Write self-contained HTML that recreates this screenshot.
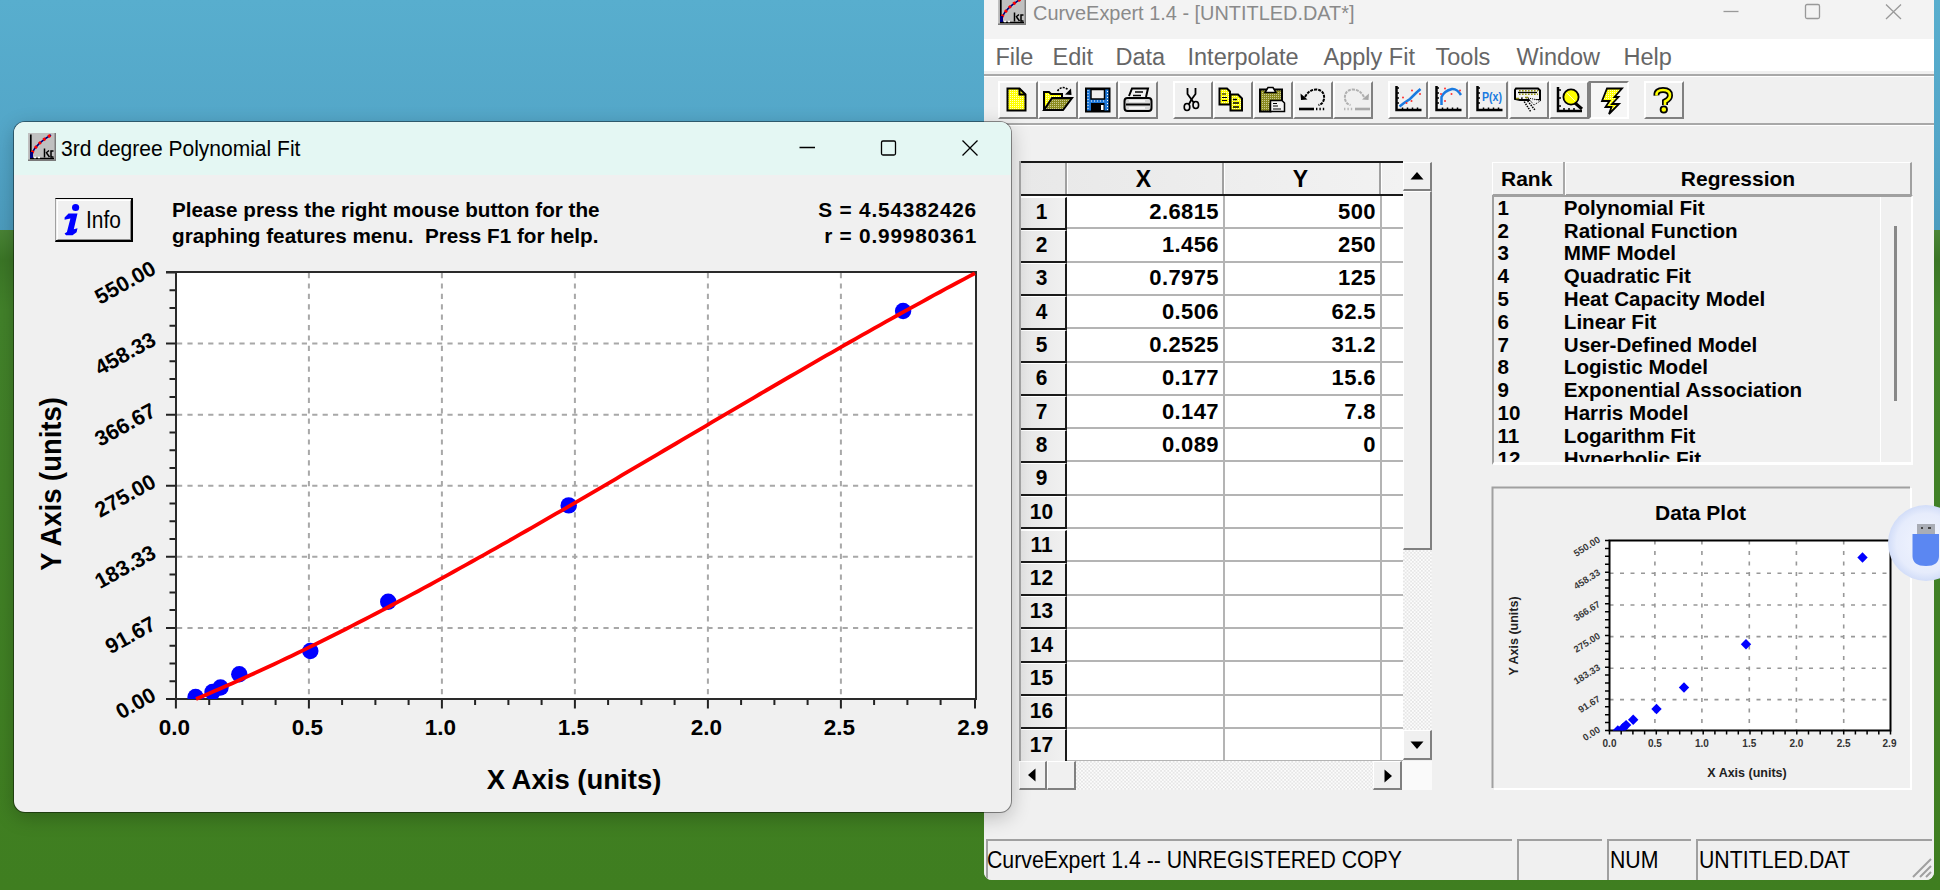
<!DOCTYPE html><html><head><meta charset="utf-8"><style>
*{margin:0;padding:0;box-sizing:border-box}
html,body{width:1940px;height:890px;overflow:hidden}
body{position:relative;font-family:"Liberation Sans",sans-serif;background:#4a8a30}
.a{position:absolute}
.t{white-space:nowrap;line-height:1}
#sky{left:0;top:0;width:1940px;height:231px;background:linear-gradient(180deg,#58aece 0%,#53a6c8 60%,#4c9cbe 100%)}
#grass{left:0;top:230px;width:1940px;height:660px;background:linear-gradient(180deg,#4a8436 0px,#3b7626 30px,#42822a 80px,#3f7e20 100%)}
#main{left:984px;top:0;width:950px;height:880px;background:#f0f0f0;border-bottom-right-radius:8px;border-bottom-left-radius:8px;overflow:hidden}
#fit{left:14px;top:122px;width:997px;height:689.5px;background:#f0f0f0;border-radius:11px;overflow:hidden;box-shadow:0 0 0 1px rgba(0,0,0,0.42),0 5px 20px rgba(0,0,0,0.24)}
.btn{position:absolute;width:40px;height:38px;background:#f0f0f0;border-style:solid;border-width:2px;border-color:#fff #808080 #808080 #fff}
.btn svg{position:absolute;left:0;top:0}
.menu{position:absolute;top:46px;font-size:23.5px;color:#666;white-space:nowrap;line-height:1}
.rh{position:absolute;left:0;width:47px;background:#f0f0f0;border-style:solid;border-width:1px 2px 2px 1px;border-color:#fff #202020 #202020 #fff;font-weight:bold;font-size:19px;text-align:center}
.cell{position:absolute;font-size:19px;text-align:right;font-weight:bold}
.li{position:absolute;font-weight:bold;font-size:20.6px;white-space:nowrap;line-height:1}
</style></head><body><div id="sky" class="a"></div><div id="grass" class="a"></div><div id="main" class="a"><div class="a" style="left:0;top:0;width:950px;height:39px;background:#f3f3f3"></div><div class="a" style="left:14px;top:-3px"><svg width="28" height="28" viewBox="0 0 28 28"><rect x="0" y="0" width="28" height="28" fill="#c0c0c0"/><path d="M27.3 0V27.3H0" stroke="#7a7a7a" stroke-width="1.5" fill="none"/><path d="M2.8 1.5V25.5H26" stroke="#000" stroke-width="1.7" fill="none"/><path d="M4 20Q9 10 23 2" stroke="#00007a" stroke-width="1.6" fill="none"/><path d="M4 20Q9 10 23 2" stroke="#ff0000" stroke-width="3" stroke-dasharray="2.6 3.2" fill="none"/><path d="M2 19H5V25H2Z" fill="#000080"/><path d="M16.5 15.5V24.5M18 20L21 17.5M18.5 20L21.5 24M25.5 18H23V24H25.5" stroke="#000" stroke-width="1.5" fill="none"/><path d="M6 24.5H8M10 24.5H12" stroke="#fff" stroke-width="1.5"/></svg></div><div class="a t" style="left:48.5px;top:2.3px;font-size:21px;color:#8a8a8a;transform:scaleX(.948);transform-origin:0 0">CurveExpert 1.4 - [UNTITLED.DAT*]</div><svg class="a" style="left:730px;top:0" width="220" height="30"><path d="M9.5 11.5H24.5" stroke="#999" stroke-width="1.3"/><rect x="91.5" y="4.5" width="14" height="14" rx="1.5" stroke="#999" stroke-width="1.3" fill="none"/><path d="M172 4.5L187 19M187 4.5L172 19" stroke="#999" stroke-width="1.3"/></svg><div class="a" style="left:0;top:39px;width:950px;height:32px;background:#fff"></div><div class="menu" style="left:11.5px">File</div><div class="menu" style="left:68.5px">Edit</div><div class="menu" style="left:131.5px">Data</div><div class="menu" style="left:203.5px">Interpolate</div><div class="menu" style="left:339.5px">Apply Fit</div><div class="menu" style="left:451.5px">Tools</div><div class="menu" style="left:532.5px">Window</div><div class="menu" style="left:639.5px">Help</div><div class="a" style="left:0;top:74px;width:950px;height:2px;background:#a8a8a8"></div><div class="a" style="left:0;top:76px;width:950px;height:1px;background:#fff"></div><div class="a" style="left:0;top:123px;width:950px;height:2px;background:#a8a8a8"></div><div class="a" style="left:0;top:125px;width:950px;height:1px;background:#fff"></div><div class="btn" style="left:14px;top:81px"></div><div class="btn" style="left:54px;top:81px"></div><div class="btn" style="left:94px;top:81px"></div><div class="btn" style="left:134px;top:81px"></div><div class="btn" style="left:189px;top:81px"></div><div class="btn" style="left:229px;top:81px"></div><div class="btn" style="left:269px;top:81px"></div><div class="btn" style="left:309px;top:81px"></div><div class="btn" style="left:349px;top:81px"></div><div class="btn" style="left:404px;top:81px"></div><div class="btn" style="left:444px;top:81px"></div><div class="btn" style="left:484px;top:81px"></div><div class="btn" style="left:525px;top:81px"></div><div class="btn" style="left:565px;top:81px"></div><div class="btn" style="left:605px;top:81px;border-color:#808080 #fff #fff #808080;background:#f6f6f6"></div><div class="btn" style="left:660px;top:81px"></div><svg class="a" style="left:0;top:76px" width="950" height="48" viewBox="984 76 950 48"><defs><pattern id="dy" width="2" height="2" patternUnits="userSpaceOnUse"><rect width="2" height="2" fill="#ffff00"/><rect width="1" height="1" fill="#ffffc0"/></pattern><pattern id="do" width="2" height="2" patternUnits="userSpaceOnUse"><rect width="2" height="2" fill="#8a8a20"/><rect width="1" height="1" fill="#c8c890"/></pattern><pattern id="dw" width="2" height="2" patternUnits="userSpaceOnUse"><rect width="2" height="2" fill="#f4f4f4"/><rect width="1" height="1" fill="#e0e0e0"/></pattern></defs><path d="M1007.5 88.5H1019.5L1025.5 94.5V110.5H1007.5Z" fill="url(#dy)" stroke="#000" stroke-width="2"/><path d="M1019.5 88.5V94.5H1025.5" stroke="#000" fill="none" stroke-width="2"/><path d="M1044 110V92H1049L1051 94H1062V98" fill="url(#dy)" stroke="#000" stroke-width="2"/><path d="M1044 110L1052 98H1072L1063 110Z" fill="url(#do)" stroke="#000" stroke-width="2"/><path d="M1057.5 91Q1062 85 1068 89.5" stroke="#000" fill="none" stroke-width="1.6" stroke-dasharray="2 1.2"/><path d="M1065 94.5L1071.5 95L1071 88.5Z" fill="#000"/><rect x="1086" y="88.5" width="23.5" height="23" fill="#1e78d8" stroke="#000" stroke-width="2"/><rect x="1091" y="89.5" width="13.5" height="9.5" fill="#f0f0f0" stroke="#000" stroke-width="1.5"/><rect x="1091" y="103" width="13.5" height="8.5" fill="#000"/><rect x="1101" y="105" width="2.5" height="5" fill="#fff"/><path d="M1088 90V110M1107.5 91V110M1091 101H1105" stroke="#fff" stroke-width="1" stroke-dasharray="1 2"/><path d="M1129 96L1132 88.5H1148L1146 97" fill="#f0f0f0" stroke="#000" stroke-width="2"/><path d="M1135 92H1143M1133 95.5H1141" stroke="#000" stroke-width="1.5"/><rect x="1124.5" y="98" width="27" height="13" rx="3" fill="#d8d8d8" stroke="#000" stroke-width="2"/><path d="M1126 104.5H1150" stroke="#000" stroke-width="2"/><path d="M1129 101H1145M1129 108H1145" stroke="#fff" stroke-width="1.5"/><path d="M1187.5 88V94L1191.5 99.5L1195.5 94V88" stroke="#000" fill="none" stroke-width="1.8"/><path d="M1189 104L1191.5 99.5L1194 103" stroke="#000" fill="none" stroke-width="1.8"/><ellipse cx="1187" cy="107" rx="2.8" ry="3.5" stroke="#000" fill="none" stroke-width="1.6"/><ellipse cx="1195.8" cy="105" rx="2.8" ry="3.5" stroke="#000" fill="none" stroke-width="1.6"/><path d="M1219.5 88.5H1227L1230 91.5V104.5H1219.5Z" fill="url(#dy)" stroke="#000" stroke-width="2"/><path d="M1222 94H1226M1222 97.5H1227M1222 100.5H1227" stroke="#000" stroke-width="1.2"/><path d="M1230.5 94.5H1238L1242 98.5V110.5H1230.5Z" fill="url(#dy)" stroke="#000" stroke-width="2"/><path d="M1233 99.5H1237M1233 103H1239M1233 107H1239" stroke="#000" stroke-width="1.3"/><path d="M1260 89.5H1282V104H1270.5V111.5H1260Z" fill="url(#do)" stroke="#000" stroke-width="2"/><path d="M1265 92.5L1268 87.5H1273L1276 92.5Z" fill="#fff" stroke="#000" stroke-width="1.5"/><path d="M1270.5 100.5H1282L1284.5 103V111.5H1270.5Z" fill="#f4f4f4" stroke="#000" stroke-width="1.5"/><path d="M1273 103.5H1277M1273 106H1278M1273 109H1281" stroke="#000" stroke-width="1.2"/><path d="M1305 97Q1309 89.5 1316 89.5Q1325 90 1324 99Q1323 104 1318.5 105" stroke="#000" fill="none" stroke-width="2" stroke-dasharray="3 1"/><path d="M1300.5 93.5L1301 100L1307.5 99.5Z" fill="#000"/><path d="M1299 109H1314" stroke="#000" stroke-width="2.6"/><path d="M1316 109H1325" stroke="#000" stroke-width="2.6" stroke-dasharray="1.4 2"/><path d="M1364 97Q1360 89.5 1353 89.5Q1344 90 1345 99Q1346 104 1350.5 105" stroke="#b0b0b0" fill="none" stroke-width="2" stroke-dasharray="3 1"/><path d="M1369 93.5L1368.5 100L1362 99.5Z" fill="#a8a8a8"/><path d="M1355 109H1370" stroke="#a8a8a8" stroke-width="2.6"/><path d="M1344 109H1353" stroke="#b8b8b8" stroke-width="2.6" stroke-dasharray="1.4 2"/><path d="M1396.5 86V110H1421.5" stroke="#000" stroke-width="2.5" fill="none"/><path d="M1396.5 88.0H1399.0 M1396.5 93.0H1399.0 M1396.5 98.0H1399.0 M1396.5 103.0H1399.0 M1402.5 110V107.5 M1407.5 110V107.5 M1412.5 110V107.5 M1417.5 110V107.5" stroke="#000" stroke-width="1.5"/><path d="M1399.5 106.5L1404 103L1410 99L1416 93L1420.5 89" stroke="#1a7ae0" stroke-width="2.5" fill="none"/><circle cx="1403.0" cy="97.5" r="1" fill="#ff3030"/><circle cx="1412.0" cy="90.5" r="1" fill="#ff3030"/><circle cx="1406.5" cy="103.0" r="1" fill="#ff3030"/><circle cx="1411.5" cy="101.0" r="1" fill="#ff3030"/><circle cx="1420.0" cy="94.0" r="1" fill="#ff3030"/><path d="M1436.5 86V110H1461.5" stroke="#000" stroke-width="2.5" fill="none"/><path d="M1436.5 88.0H1439.0 M1436.5 93.0H1439.0 M1436.5 98.0H1439.0 M1436.5 103.0H1439.0 M1442.5 110V107.5 M1447.5 110V107.5 M1452.5 110V107.5 M1457.5 110V107.5" stroke="#000" stroke-width="1.5"/><path d="M1441.5 105V97Q1444 91 1452 89Q1457 88.5 1461 95" stroke="#1a7ae0" stroke-width="2.5" fill="none"/><circle cx="1445.0" cy="88.5" r="1" fill="#ff3030"/><circle cx="1441.0" cy="94.0" r="1" fill="#ff3030"/><circle cx="1445.0" cy="101.0" r="1" fill="#ff3030"/><circle cx="1451.5" cy="94.0" r="1" fill="#ff3030"/><circle cx="1460.0" cy="90.5" r="1" fill="#ff3030"/><path d="M1477.5 86V110H1502.5" stroke="#000" stroke-width="2.5" fill="none"/><path d="M1477.5 88.0H1480.0 M1477.5 93.0H1480.0 M1477.5 98.0H1480.0 M1477.5 103.0H1480.0 M1483.5 110V107.5 M1488.5 110V107.5 M1493.5 110V107.5 M1498.5 110V107.5" stroke="#000" stroke-width="1.5"/><text x="1482" y="101" font-size="13" fill="#1a7ae0" font-weight="bold" textLength="20" lengthAdjust="spacingAndGlyphs">P(x)</text><path d="M1516 88.5H1538L1540 90.5V100H1520L1515 99V90Z" fill="#f4f4f4" stroke="#000" stroke-width="2"/><path d="M1519 90.8H1538M1519 94.2H1538" stroke="#9a9a10" stroke-width="1.6" stroke-dasharray="1.6 1.4"/><path d="M1518 92.5H1537" stroke="#000" stroke-width="1.3"/><path d="M1516 98.5H1519M1525 97.5H1528" stroke="#8a8a10" stroke-width="1.6"/><path d="M1528 98L1541 100.5L1534 105Z" fill="url(#dw)" stroke="#000" stroke-width="1" stroke-dasharray="1 1"/><path d="M1521.5 97.5L1531 112M1526 99L1535 110" stroke="#000" stroke-width="1.5" stroke-dasharray="1.5 1"/><path d="M1558 87V111H1582" stroke="#000" stroke-width="2.5" fill="none"/><path d="M1558 90H1561M1558 98H1561M1558 106H1561M1564 111V108M1569 111V108M1574 111V108" stroke="#000" stroke-width="1.5"/><circle cx="1571" cy="97" r="7.6" fill="#ffff00" stroke="#000" stroke-width="1.8"/><path d="M1567 93L1575 101" stroke="#fff" stroke-width="1" opacity=".7"/><path d="M1575 103L1582 109" stroke="#000" stroke-width="3"/><path d="M1607 88.5H1622L1614.5 97H1618.5L1612 104H1619L1609 114L1611.5 107H1605.5L1609.5 101H1602Z" fill="url(#dy)" stroke="#000" stroke-width="1.8" stroke-linejoin="miter"/><path d="M1656.5 95.5Q1656 90 1663 90Q1670 90 1670 95.5Q1670 99 1665 101.5V105" stroke="#000" stroke-width="6" fill="none"/><path d="M1656.5 95.5Q1656 90 1663 90Q1670 90 1670 95.5Q1670 99 1665 101.5V105" stroke="#ffff00" stroke-width="2.6" fill="none"/><circle cx="1663.8" cy="109.5" r="3.2" fill="#ffff00" stroke="#000" stroke-width="1.8"/></svg><div class="a" style="left:0;top:839px;width:950px;height:41px;background:#f0f0f0"></div><div class="a" style="left:2px;top:839px;width:526px;height:41px;border-top:2px solid #a0a0a0;border-left:2px solid #a0a0a0"></div><div class="a" style="left:533px;top:839px;width:85px;height:41px;border-top:2px solid #a0a0a0;border-left:2px solid #a0a0a0"></div><div class="a" style="left:623px;top:839px;width:84px;height:41px;border-top:2px solid #a0a0a0;border-left:2px solid #a0a0a0"></div><div class="a" style="left:712px;top:839px;width:236px;height:41px;border-top:2px solid #a0a0a0;border-left:2px solid #a0a0a0"></div><div class="a t" style="left:3px;top:849.3px;font-size:23px;color:#000;transform:scaleX(.925);transform-origin:0 0">CurveExpert 1.4 -- UNREGISTERED COPY</div><div class="a t" style="left:625.5px;top:849.3px;font-size:23px;color:#000;transform:scaleX(.925);transform-origin:0 0">NUM</div><div class="a t" style="left:714.5px;top:849.3px;font-size:23px;color:#000;transform:scaleX(.925);transform-origin:0 0">UNTITLED.DAT</div><svg class="a" style="left:925px;top:855px" width="25" height="25"><path d="M22 4L4 22M22 11L11 22M22 17L17 22" stroke="#a0a0a0" stroke-width="2"/></svg><div class="a" style="left:36px;top:161px;width:383px;height:600px;background:#fff"></div><div class="a" style="left:36px;top:161px;width:383px;height:35px;background:linear-gradient(90deg,#e8e8e8,#f2f2f2);border-top:2px solid #1a1a1a;border-bottom:2px solid #1a1a1a"></div><div class="a" style="left:36px;top:163px;width:47px;height:31px;border-left:1px solid #fff;border-right:2px solid #a0a0a0"></div><div class="a" style="left:83px;top:163px;width:157px;height:31px;border-left:1px solid #fff;border-right:2px solid #a0a0a0"></div><div class="a t" style="left:81px;top:167.8px;width:157px;text-align:center;font-size:23px;font-weight:bold">X</div><div class="a" style="left:240px;top:163px;width:157px;height:31px;border-left:1px solid #fff;border-right:2px solid #a0a0a0"></div><div class="a t" style="left:238px;top:167.8px;width:157px;text-align:center;font-size:23px;font-weight:bold">Y</div><div class="a" style="left:397px;top:163px;width:22px;height:31px;border-left:1px solid #fff;"></div><div class="a" style="left:36px;top:196.5px;width:47px;height:33.3px;background:linear-gradient(90deg,#e6e6e6,#f0f0f0);border-top:1px solid #fff;border-left:1px solid #fff;border-right:2px solid #1a1a1a;border-bottom:2px solid #1a1a1a"></div><div class="a t" style="left:35px;top:200.8px;width:45px;text-align:center;font-size:22px;font-weight:bold;transform:scaleX(.95)">1</div><div class="a" style="left:83px;top:227.3px;width:336px;height:2px;background:#b4b4b4"></div><div class="a" style="left:36px;top:229.8px;width:47px;height:33.3px;background:linear-gradient(90deg,#e6e6e6,#f0f0f0);border-top:1px solid #fff;border-left:1px solid #fff;border-right:2px solid #1a1a1a;border-bottom:2px solid #1a1a1a"></div><div class="a t" style="left:35px;top:234.1px;width:45px;text-align:center;font-size:22px;font-weight:bold;transform:scaleX(.95)">2</div><div class="a" style="left:83px;top:260.6px;width:336px;height:2px;background:#b4b4b4"></div><div class="a" style="left:36px;top:263.1px;width:47px;height:33.3px;background:linear-gradient(90deg,#e6e6e6,#f0f0f0);border-top:1px solid #fff;border-left:1px solid #fff;border-right:2px solid #1a1a1a;border-bottom:2px solid #1a1a1a"></div><div class="a t" style="left:35px;top:267.4px;width:45px;text-align:center;font-size:22px;font-weight:bold;transform:scaleX(.95)">3</div><div class="a" style="left:83px;top:293.9px;width:336px;height:2px;background:#b4b4b4"></div><div class="a" style="left:36px;top:296.4px;width:47px;height:33.3px;background:linear-gradient(90deg,#e6e6e6,#f0f0f0);border-top:1px solid #fff;border-left:1px solid #fff;border-right:2px solid #1a1a1a;border-bottom:2px solid #1a1a1a"></div><div class="a t" style="left:35px;top:300.7px;width:45px;text-align:center;font-size:22px;font-weight:bold;transform:scaleX(.95)">4</div><div class="a" style="left:83px;top:327.2px;width:336px;height:2px;background:#b4b4b4"></div><div class="a" style="left:36px;top:329.7px;width:47px;height:33.3px;background:linear-gradient(90deg,#e6e6e6,#f0f0f0);border-top:1px solid #fff;border-left:1px solid #fff;border-right:2px solid #1a1a1a;border-bottom:2px solid #1a1a1a"></div><div class="a t" style="left:35px;top:334.0px;width:45px;text-align:center;font-size:22px;font-weight:bold;transform:scaleX(.95)">5</div><div class="a" style="left:83px;top:360.5px;width:336px;height:2px;background:#b4b4b4"></div><div class="a" style="left:36px;top:363.0px;width:47px;height:33.3px;background:linear-gradient(90deg,#e6e6e6,#f0f0f0);border-top:1px solid #fff;border-left:1px solid #fff;border-right:2px solid #1a1a1a;border-bottom:2px solid #1a1a1a"></div><div class="a t" style="left:35px;top:367.3px;width:45px;text-align:center;font-size:22px;font-weight:bold;transform:scaleX(.95)">6</div><div class="a" style="left:83px;top:393.8px;width:336px;height:2px;background:#b4b4b4"></div><div class="a" style="left:36px;top:396.3px;width:47px;height:33.3px;background:linear-gradient(90deg,#e6e6e6,#f0f0f0);border-top:1px solid #fff;border-left:1px solid #fff;border-right:2px solid #1a1a1a;border-bottom:2px solid #1a1a1a"></div><div class="a t" style="left:35px;top:400.6px;width:45px;text-align:center;font-size:22px;font-weight:bold;transform:scaleX(.95)">7</div><div class="a" style="left:83px;top:427.1px;width:336px;height:2px;background:#b4b4b4"></div><div class="a" style="left:36px;top:429.6px;width:47px;height:33.3px;background:linear-gradient(90deg,#e6e6e6,#f0f0f0);border-top:1px solid #fff;border-left:1px solid #fff;border-right:2px solid #1a1a1a;border-bottom:2px solid #1a1a1a"></div><div class="a t" style="left:35px;top:433.9px;width:45px;text-align:center;font-size:22px;font-weight:bold;transform:scaleX(.95)">8</div><div class="a" style="left:83px;top:460.4px;width:336px;height:2px;background:#b4b4b4"></div><div class="a" style="left:36px;top:462.9px;width:47px;height:33.3px;background:linear-gradient(90deg,#e6e6e6,#f0f0f0);border-top:1px solid #fff;border-left:1px solid #fff;border-right:2px solid #1a1a1a;border-bottom:2px solid #1a1a1a"></div><div class="a t" style="left:35px;top:467.2px;width:45px;text-align:center;font-size:22px;font-weight:bold;transform:scaleX(.95)">9</div><div class="a" style="left:83px;top:493.7px;width:336px;height:2px;background:#b4b4b4"></div><div class="a" style="left:36px;top:496.2px;width:47px;height:33.3px;background:linear-gradient(90deg,#e6e6e6,#f0f0f0);border-top:1px solid #fff;border-left:1px solid #fff;border-right:2px solid #1a1a1a;border-bottom:2px solid #1a1a1a"></div><div class="a t" style="left:35px;top:500.5px;width:45px;text-align:center;font-size:22px;font-weight:bold;transform:scaleX(.95)">10</div><div class="a" style="left:83px;top:527.0px;width:336px;height:2px;background:#b4b4b4"></div><div class="a" style="left:36px;top:529.5px;width:47px;height:33.3px;background:linear-gradient(90deg,#e6e6e6,#f0f0f0);border-top:1px solid #fff;border-left:1px solid #fff;border-right:2px solid #1a1a1a;border-bottom:2px solid #1a1a1a"></div><div class="a t" style="left:35px;top:533.8px;width:45px;text-align:center;font-size:22px;font-weight:bold;transform:scaleX(.95)">11</div><div class="a" style="left:83px;top:560.3px;width:336px;height:2px;background:#b4b4b4"></div><div class="a" style="left:36px;top:562.8px;width:47px;height:33.3px;background:linear-gradient(90deg,#e6e6e6,#f0f0f0);border-top:1px solid #fff;border-left:1px solid #fff;border-right:2px solid #1a1a1a;border-bottom:2px solid #1a1a1a"></div><div class="a t" style="left:35px;top:567.1px;width:45px;text-align:center;font-size:22px;font-weight:bold;transform:scaleX(.95)">12</div><div class="a" style="left:83px;top:593.6px;width:336px;height:2px;background:#b4b4b4"></div><div class="a" style="left:36px;top:596.1px;width:47px;height:33.3px;background:linear-gradient(90deg,#e6e6e6,#f0f0f0);border-top:1px solid #fff;border-left:1px solid #fff;border-right:2px solid #1a1a1a;border-bottom:2px solid #1a1a1a"></div><div class="a t" style="left:35px;top:600.4px;width:45px;text-align:center;font-size:22px;font-weight:bold;transform:scaleX(.95)">13</div><div class="a" style="left:83px;top:626.9px;width:336px;height:2px;background:#b4b4b4"></div><div class="a" style="left:36px;top:629.4px;width:47px;height:33.3px;background:linear-gradient(90deg,#e6e6e6,#f0f0f0);border-top:1px solid #fff;border-left:1px solid #fff;border-right:2px solid #1a1a1a;border-bottom:2px solid #1a1a1a"></div><div class="a t" style="left:35px;top:633.7px;width:45px;text-align:center;font-size:22px;font-weight:bold;transform:scaleX(.95)">14</div><div class="a" style="left:83px;top:660.2px;width:336px;height:2px;background:#b4b4b4"></div><div class="a" style="left:36px;top:662.7px;width:47px;height:33.3px;background:linear-gradient(90deg,#e6e6e6,#f0f0f0);border-top:1px solid #fff;border-left:1px solid #fff;border-right:2px solid #1a1a1a;border-bottom:2px solid #1a1a1a"></div><div class="a t" style="left:35px;top:667.0px;width:45px;text-align:center;font-size:22px;font-weight:bold;transform:scaleX(.95)">15</div><div class="a" style="left:83px;top:693.5px;width:336px;height:2px;background:#b4b4b4"></div><div class="a" style="left:36px;top:696.0px;width:47px;height:33.3px;background:linear-gradient(90deg,#e6e6e6,#f0f0f0);border-top:1px solid #fff;border-left:1px solid #fff;border-right:2px solid #1a1a1a;border-bottom:2px solid #1a1a1a"></div><div class="a t" style="left:35px;top:700.3px;width:45px;text-align:center;font-size:22px;font-weight:bold;transform:scaleX(.95)">16</div><div class="a" style="left:83px;top:726.8px;width:336px;height:2px;background:#b4b4b4"></div><div class="a" style="left:36px;top:729.3px;width:47px;height:33.3px;background:linear-gradient(90deg,#e6e6e6,#f0f0f0);border-top:1px solid #fff;border-left:1px solid #fff;border-right:2px solid #1a1a1a;border-bottom:2px solid #1a1a1a"></div><div class="a t" style="left:35px;top:733.6px;width:45px;text-align:center;font-size:22px;font-weight:bold;transform:scaleX(.95)">17</div><div class="a" style="left:83px;top:760.1px;width:336px;height:2px;background:#b4b4b4"></div><div class="a" style="left:239px;top:196px;width:2px;height:566px;background:#b4b4b4"></div><div class="a" style="left:396px;top:196px;width:2px;height:566px;background:#b4b4b4"></div><div class="a t" style="left:85px;top:200.8px;width:150px;text-align:right;font-size:22px;font-weight:bold;letter-spacing:.4px">2.6815</div><div class="a t" style="left:242px;top:200.8px;width:150px;text-align:right;font-size:22px;font-weight:bold;letter-spacing:.4px">500</div><div class="a t" style="left:85px;top:234.1px;width:150px;text-align:right;font-size:22px;font-weight:bold;letter-spacing:.4px">1.456</div><div class="a t" style="left:242px;top:234.1px;width:150px;text-align:right;font-size:22px;font-weight:bold;letter-spacing:.4px">250</div><div class="a t" style="left:85px;top:267.4px;width:150px;text-align:right;font-size:22px;font-weight:bold;letter-spacing:.4px">0.7975</div><div class="a t" style="left:242px;top:267.4px;width:150px;text-align:right;font-size:22px;font-weight:bold;letter-spacing:.4px">125</div><div class="a t" style="left:85px;top:300.7px;width:150px;text-align:right;font-size:22px;font-weight:bold;letter-spacing:.4px">0.506</div><div class="a t" style="left:242px;top:300.7px;width:150px;text-align:right;font-size:22px;font-weight:bold;letter-spacing:.4px">62.5</div><div class="a t" style="left:85px;top:334.0px;width:150px;text-align:right;font-size:22px;font-weight:bold;letter-spacing:.4px">0.2525</div><div class="a t" style="left:242px;top:334.0px;width:150px;text-align:right;font-size:22px;font-weight:bold;letter-spacing:.4px">31.2</div><div class="a t" style="left:85px;top:367.3px;width:150px;text-align:right;font-size:22px;font-weight:bold;letter-spacing:.4px">0.177</div><div class="a t" style="left:242px;top:367.3px;width:150px;text-align:right;font-size:22px;font-weight:bold;letter-spacing:.4px">15.6</div><div class="a t" style="left:85px;top:400.6px;width:150px;text-align:right;font-size:22px;font-weight:bold;letter-spacing:.4px">0.147</div><div class="a t" style="left:242px;top:400.6px;width:150px;text-align:right;font-size:22px;font-weight:bold;letter-spacing:.4px">7.8</div><div class="a t" style="left:85px;top:433.9px;width:150px;text-align:right;font-size:22px;font-weight:bold;letter-spacing:.4px">0.089</div><div class="a t" style="left:242px;top:433.9px;width:150px;text-align:right;font-size:22px;font-weight:bold;letter-spacing:.4px">0</div><div class="a" style="left:35px;top:161px;width:1.5px;height:600px;background:#a8a8a8"></div><div class="a" style="left:419px;top:162px;width:29px;height:598px;background:repeating-conic-gradient(#e6e6e6 0 25%,#fcfcfc 0 50%) 0 0/3.6px 3.6px"></div><div class="a" style="left:419px;top:162px;width:29px;height:29px;background:#f0f0f0;border-style:solid;border-width:1px 2px 2px 1px;border-color:#fff #808080 #808080 #fff"></div><svg class="a" style="left:426px;top:171px" width="14" height="9"><path d="M0.5 8.5L7 1L13.5 8.5Z" fill="#000"/></svg><div class="a" style="left:419px;top:191px;width:29px;height:359px;background:#f0f0f0;border-style:solid;border-width:1px 2px 2px 1px;border-color:#fff #808080 #808080 #fff"></div><div class="a" style="left:419px;top:730px;width:29px;height:30px;background:#f0f0f0;border-style:solid;border-width:1px 2px 2px 1px;border-color:#fff #808080 #808080 #fff"></div><svg class="a" style="left:426px;top:741px" width="14" height="9"><path d="M0.5 0.5L7 8L13.5 0.5Z" fill="#000"/></svg><div class="a" style="left:36px;top:761px;width:383px;height:29px;background:repeating-conic-gradient(#e6e6e6 0 25%,#fcfcfc 0 50%) 0 0/3.6px 3.6px"></div><div class="a" style="left:35px;top:761px;width:28px;height:29px;background:#f0f0f0;border-style:solid;border-width:1px 2px 2px 1px;border-color:#fff #808080 #808080 #fff"></div><svg class="a" style="left:43px;top:768px" width="9" height="14"><path d="M8.5 0.5L1 7L8.5 13.5Z" fill="#000"/></svg><div class="a" style="left:63px;top:761px;width:29px;height:29px;background:#f0f0f0;border-style:solid;border-width:1px 2px 2px 1px;border-color:#fff #808080 #808080 #fff"></div><div class="a" style="left:389px;top:761px;width:29px;height:29px;background:#f0f0f0;border-style:solid;border-width:1px 2px 2px 1px;border-color:#fff #808080 #808080 #fff"></div><svg class="a" style="left:400px;top:769px" width="9" height="14"><path d="M0.5 0.5L8 7L0.5 13.5Z" fill="#000"/></svg><div class="a" style="left:418px;top:761px;width:30px;height:29px;background:#fafafa"></div><div class="a" style="left:508px;top:162px;width:420px;height:34px;background:#f0f0f0;border-style:solid;border-width:1px 2px 2px 1px;border-color:#fff #a0a0a0 #a0a0a0 #fff"></div><div class="a" style="left:579px;top:162px;width:2px;height:33px;background:#a8a8a8"></div><div class="a" style="left:581px;top:163px;width:1px;height:32px;background:#fff"></div><div class="a t" style="left:517px;top:168px;font-size:21px;font-weight:bold">Rank</div><div class="a t" style="left:581px;top:168px;width:346px;text-align:center;font-size:21px;font-weight:bold">Regression</div><div class="a" style="left:508px;top:195px;width:421px;height:270px;background:#f0f0f0;border-style:solid;border-width:2px 2px 3px 2px;border-color:#a0a0a0 #fff #fff #a0a0a0;overflow:hidden"><div class="li" style="left:3.5px;top:0.8px">1</div><div class="li" style="left:69.8px;top:0.8px">Polynomial Fit</div><div class="li" style="left:3.5px;top:23.6px">2</div><div class="li" style="left:69.8px;top:23.6px">Rational Function</div><div class="li" style="left:3.5px;top:46.4px">3</div><div class="li" style="left:69.8px;top:46.4px">MMF Model</div><div class="li" style="left:3.5px;top:69.2px">4</div><div class="li" style="left:69.8px;top:69.2px">Quadratic Fit</div><div class="li" style="left:3.5px;top:92.0px">5</div><div class="li" style="left:69.8px;top:92.0px">Heat Capacity Model</div><div class="li" style="left:3.5px;top:114.8px">6</div><div class="li" style="left:69.8px;top:114.8px">Linear Fit</div><div class="li" style="left:3.5px;top:137.6px">7</div><div class="li" style="left:69.8px;top:137.6px">User-Defined Model</div><div class="li" style="left:3.5px;top:160.4px">8</div><div class="li" style="left:69.8px;top:160.4px">Logistic Model</div><div class="li" style="left:3.5px;top:183.2px">9</div><div class="li" style="left:69.8px;top:183.2px">Exponential Association</div><div class="li" style="left:3.5px;top:206.0px">10</div><div class="li" style="left:69.8px;top:206.0px">Harris Model</div><div class="li" style="left:3.5px;top:228.8px">11</div><div class="li" style="left:69.8px;top:228.8px">Logarithm Fit</div><div class="li" style="left:3.5px;top:251.6px">12</div><div class="li" style="left:69.8px;top:251.6px">Hyperbolic Fit</div></div><div class="a" style="left:896px;top:197px;width:1px;height:266px;background:#fff"></div><div class="a" style="left:910px;top:226px;width:3px;height:175px;background:#888"></div><svg class="a" style="left:506px;top:480px" width="450" height="320" viewBox="1490 480 450 320"><path d="M1492.5 788V487.5H1910" stroke="#a0a0a0" stroke-width="2" fill="none"/><path d="M1494 789H1911V488" stroke="#fff" stroke-width="2" fill="none"/><text x="1700.5" y="520" text-anchor="middle" font-size="21" font-weight="bold">Data Plot</text><rect x="1609.5" y="540.5" width="281.0" height="190.0" fill="#fff"/><path d="M1654.9 540.5V730.5 M1701.9 540.5V730.5 M1749.3 540.5V730.5 M1796.4 540.5V730.5 M1843.7 540.5V730.5 M1609.5 573.3H1890.5 M1609.5 605.0H1890.5 M1609.5 636.6H1890.5 M1609.5 668.3H1890.5 M1609.5 699.6H1890.5" stroke="#989898" stroke-width="1.6" stroke-dasharray="4 6.5" fill="none"/><path d="M1605 540.5H1609.5 M1609.5 730.5V734.5 M1605 548.4H1609.5 M1621.2 730.5V734.5 M1605 556.3H1609.5 M1632.9 730.5V734.5 M1605 564.3H1609.5 M1644.6 730.5V734.5 M1605 572.2H1609.5 M1656.3 730.5V734.5 M1605 580.1H1609.5 M1668.0 730.5V734.5 M1605 588.0H1609.5 M1679.7 730.5V734.5 M1605 595.9H1609.5 M1691.5 730.5V734.5 M1605 603.8H1609.5 M1703.2 730.5V734.5 M1605 611.8H1609.5 M1714.9 730.5V734.5 M1605 619.7H1609.5 M1726.6 730.5V734.5 M1605 627.6H1609.5 M1738.3 730.5V734.5 M1605 635.5H1609.5 M1750.0 730.5V734.5 M1605 643.4H1609.5 M1761.7 730.5V734.5 M1605 651.3H1609.5 M1773.4 730.5V734.5 M1605 659.3H1609.5 M1785.1 730.5V734.5 M1605 667.2H1609.5 M1796.8 730.5V734.5 M1605 675.1H1609.5 M1808.5 730.5V734.5 M1605 683.0H1609.5 M1820.2 730.5V734.5 M1605 690.9H1609.5 M1831.9 730.5V734.5 M1605 698.9H1609.5 M1843.7 730.5V734.5 M1605 706.8H1609.5 M1855.4 730.5V734.5 M1605 714.7H1609.5 M1867.1 730.5V734.5 M1605 722.6H1609.5 M1878.8 730.5V734.5 M1605 730.5H1609.5 M1890.5 730.5V734.5" stroke="#000" stroke-width="1.5"/><rect x="1609.5" y="540.5" width="281.0" height="190.0" fill="none" stroke="#000" stroke-width="2"/><clipPath id="mpc"><rect x="1610" y="541" width="280" height="189.5"/></clipPath><g clip-path="url(#mpc)"><path d="M1862.5 552.3l5.2 5.2l-5.2 5.2l-5.2 -5.2Z" fill="#0000ff"/><path d="M1746.0 639.0l5.2 5.2l-5.2 5.2l-5.2 -5.2Z" fill="#0000ff"/><path d="M1684.0 682.3l5.2 5.2l-5.2 5.2l-5.2 -5.2Z" fill="#0000ff"/><path d="M1656.5 703.8l5.2 5.2l-5.2 5.2l-5.2 -5.2Z" fill="#0000ff"/><path d="M1633.2 714.5l5.2 5.2l-5.2 5.2l-5.2 -5.2Z" fill="#0000ff"/><path d="M1626.1 719.9l5.2 5.2l-5.2 5.2l-5.2 -5.2Z" fill="#0000ff"/><path d="M1623.3 722.6l5.2 5.2l-5.2 5.2l-5.2 -5.2Z" fill="#0000ff"/><path d="M1617.8 725.3l5.2 5.2l-5.2 5.2l-5.2 -5.2Z" fill="#0000ff"/></g><text x="1601" y="541.5" text-anchor="end" font-size="9.5" fill="#3a3a3a" font-weight="bold" transform="rotate(-32 1601 541.5)">550.00</text><text x="1601" y="574.3" text-anchor="end" font-size="9.5" fill="#3a3a3a" font-weight="bold" transform="rotate(-32 1601 574.3)">458.33</text><text x="1601" y="606.0" text-anchor="end" font-size="9.5" fill="#3a3a3a" font-weight="bold" transform="rotate(-32 1601 606.0)">366.67</text><text x="1601" y="637.6" text-anchor="end" font-size="9.5" fill="#3a3a3a" font-weight="bold" transform="rotate(-32 1601 637.6)">275.00</text><text x="1601" y="669.3" text-anchor="end" font-size="9.5" fill="#3a3a3a" font-weight="bold" transform="rotate(-32 1601 669.3)">183.33</text><text x="1601" y="700.6" text-anchor="end" font-size="9.5" fill="#3a3a3a" font-weight="bold" transform="rotate(-32 1601 700.6)">91.67</text><text x="1601" y="731.5" text-anchor="end" font-size="9.5" fill="#3a3a3a" font-weight="bold" transform="rotate(-32 1601 731.5)">0.00</text><text x="1609.5" y="746.5" text-anchor="middle" font-size="10" fill="#333" font-weight="bold">0.0</text><text x="1654.9" y="746.5" text-anchor="middle" font-size="10" fill="#333" font-weight="bold">0.5</text><text x="1701.9" y="746.5" text-anchor="middle" font-size="10" fill="#333" font-weight="bold">1.0</text><text x="1749.3" y="746.5" text-anchor="middle" font-size="10" fill="#333" font-weight="bold">1.5</text><text x="1796.4" y="746.5" text-anchor="middle" font-size="10" fill="#333" font-weight="bold">2.0</text><text x="1843.7" y="746.5" text-anchor="middle" font-size="10" fill="#333" font-weight="bold">2.5</text><text x="1889.5" y="746.5" text-anchor="middle" font-size="10" fill="#333" font-weight="bold">2.9</text><text x="1747" y="777" text-anchor="middle" font-size="12.5" font-weight="bold" fill="#222">X Axis (units)</text><text x="0" y="0" text-anchor="middle" font-size="12.5" font-weight="bold" fill="#222" transform="translate(1517.5 636) rotate(-90)">Y Axis (units)</text></svg></div><div id="fit" class="a"><div class="a" style="left:0;top:0;width:997px;height:53px;background:#e4f7f3"></div><div class="a" style="left:14px;top:11px"><svg width="28" height="28" viewBox="0 0 28 28"><rect x="0" y="0" width="28" height="28" fill="#c0c0c0"/><path d="M27.3 0V27.3H0" stroke="#7a7a7a" stroke-width="1.5" fill="none"/><path d="M2.8 1.5V25.5H26" stroke="#000" stroke-width="1.7" fill="none"/><path d="M4 20Q9 10 23 2" stroke="#00007a" stroke-width="1.6" fill="none"/><path d="M4 20Q9 10 23 2" stroke="#ff0000" stroke-width="3" stroke-dasharray="2.6 3.2" fill="none"/><path d="M2 19H5V25H2Z" fill="#000080"/><path d="M16.5 15.5V24.5M18 20L21 17.5M18.5 20L21.5 24M25.5 18H23V24H25.5" stroke="#000" stroke-width="1.5" fill="none"/><path d="M6 24.5H8M10 24.5H12" stroke="#fff" stroke-width="1.5"/></svg></div><div class="a t" style="left:47px;top:16px;font-size:22px;color:#000;transform:scaleX(.955);transform-origin:0 0">3rd degree Polynomial Fit</div><svg class="a" style="left:780px;top:10px" width="216" height="40"><path d="M5.5 15.5H21" stroke="#000" stroke-width="1.3"/><rect x="87.5" y="9" width="14" height="14" rx="1.5" stroke="#000" stroke-width="1.3" fill="none"/><path d="M168.5 8.5L183.5 23.5M183.5 8.5L168.5 23.5" stroke="#000" stroke-width="1.3"/></svg><svg class="a" style="left:0;top:0" width="996" height="688" viewBox="14 122 996 688"><rect x="176" y="272" width="800" height="427" fill="#fff"/><path d="M308.9 273V698 M441.9 273V698 M574.9 273V698 M707.9 273V698 M840.9 273V698 M177 343.6H975 M177 414.7H975 M177 485.7H975 M177 556.8H975 M177 627.9H975" stroke="#a8a8a8" stroke-width="2" stroke-dasharray="5.2 5.2" fill="none"/><path d="M166 272.5H176 M169.5 290.3H176 M169.5 308.0H176 M169.5 325.8H176 M166 343.6H176 M169.5 361.3H176 M169.5 379.1H176 M169.5 396.9H176 M166 414.7H176 M169.5 432.4H176 M169.5 450.2H176 M169.5 468.0H176 M166 485.7H176 M169.5 503.5H176 M169.5 521.3H176 M169.5 539.0H176 M166 556.8H176 M169.5 574.6H176 M169.5 592.4H176 M169.5 610.1H176 M166 627.9H176 M169.5 645.7H176 M169.5 663.4H176 M169.5 681.2H176 M166 699.0H176 M175.9 698V708.5 M209.2 698V705 M242.4 698V705 M275.6 698V705 M308.9 698V708.5 M342.1 698V705 M375.4 698V705 M408.6 698V705 M441.9 698V708.5 M475.1 698V705 M508.4 698V705 M541.6 698V705 M574.9 698V708.5 M608.1 698V705 M641.4 698V705 M674.6 698V705 M707.9 698V708.5 M741.1 698V705 M774.4 698V705 M807.6 698V705 M840.9 698V708.5 M874.1 698V705 M907.4 698V705 M940.6 698V705 M975 698V708.5" stroke="#222" stroke-width="2" fill="none"/><path d="M166 272H976V699H176V272" stroke="#2a2a2a" stroke-width="2" fill="none"/><clipPath id="pc"><rect x="176" y="272" width="800" height="427"/></clipPath><g clip-path="url(#pc)" fill="#0000ff"><circle cx="903.1" cy="311.0" r="8.2"/><circle cx="568.7" cy="505.4" r="8.2"/><circle cx="388.2" cy="601.7" r="8.2"/><circle cx="310.3" cy="651.0" r="8.2"/><circle cx="239.3" cy="674.2" r="8.2"/><circle cx="220.5" cy="687.5" r="8.2"/><circle cx="212.5" cy="692.0" r="8.2"/><circle cx="195.6" cy="697.0" r="8.2"/></g><polyline points="196,699 202.0,696.4 208.0,693.9 214.0,691.3 220.0,688.7 226.0,686.1 232.0,683.4 238.0,680.7 244.0,678.0 250.0,675.3 256.0,672.6 262.0,669.8 268.0,667.0 274.0,664.2 280.0,661.4 286.0,658.5 292.0,655.7 298.0,652.8 304.0,649.9 310.0,646.9 316.0,644.0 322.0,641.0 328.0,638.0 334.0,635.0 340.0,632.0 346.0,629.0 352.0,625.9 358.0,622.8 364.0,619.7 370.0,616.6 376.0,613.5 382.0,610.4 388.0,607.2 394.0,604.0 400.0,600.8 406.0,597.6 412.0,594.4 418.0,591.2 424.0,587.9 430.0,584.7 436.0,581.4 442.0,578.1 448.0,574.8 454.0,571.5 460.0,568.2 466.0,564.9 472.0,561.5 478.0,558.2 484.0,554.8 490.0,551.4 496.0,548.1 502.0,544.7 508.0,541.3 514.0,537.9 520.0,534.4 526.0,531.0 532.0,527.6 538.0,524.1 544.0,520.7 550.0,517.2 556.0,513.7 562.0,510.3 568.0,506.8 574.0,503.3 580.0,499.8 586.0,496.3 592.0,492.8 598.0,489.3 604.0,485.8 610.0,482.3 616.0,478.8 622.0,475.2 628.0,471.7 634.0,468.2 640.0,464.7 646.0,461.1 652.0,457.6 658.0,454.1 664.0,450.5 670.0,447.0 676.0,443.5 682.0,439.9 688.0,436.4 694.0,432.8 700.0,429.3 706.0,425.8 712.0,422.2 718.0,418.7 724.0,415.2 730.0,411.6 736.0,408.1 742.0,404.6 748.0,401.1 754.0,397.6 760.0,394.0 766.0,390.5 772.0,387.0 778.0,383.5 784.0,380.0 790.0,376.5 796.0,373.1 802.0,369.6 808.0,366.1 814.0,362.7 820.0,359.2 826.0,355.7 832.0,352.3 838.0,348.9 844.0,345.4 850.0,342.0 856.0,338.6 862.0,335.2 868.0,331.8 874.0,328.4 880.0,325.1 886.0,321.7 892.0,318.4 898.0,315.0 904.0,311.7 910.0,308.4 916.0,305.1 922.0,301.8 928.0,298.5 934.0,295.2 940.0,292.0 946.0,288.7 952.0,285.5 958.0,282.3 964.0,279.1 970.0,275.9 975.0,273.3" stroke="#ff0000" stroke-width="3.8" fill="none"/><text x="157.5" y="273.0" text-anchor="end" font-size="21.5" font-weight="bold" transform="rotate(-29 157.5 273.0)">550.00</text><text x="157.5" y="344.1" text-anchor="end" font-size="21.5" font-weight="bold" transform="rotate(-29 157.5 344.1)">458.33</text><text x="157.5" y="415.2" text-anchor="end" font-size="21.5" font-weight="bold" transform="rotate(-29 157.5 415.2)">366.67</text><text x="157.5" y="486.2" text-anchor="end" font-size="21.5" font-weight="bold" transform="rotate(-29 157.5 486.2)">275.00</text><text x="157.5" y="557.3" text-anchor="end" font-size="21.5" font-weight="bold" transform="rotate(-29 157.5 557.3)">183.33</text><text x="157.5" y="628.4" text-anchor="end" font-size="21.5" font-weight="bold" transform="rotate(-29 157.5 628.4)">91.67</text><text x="157.5" y="699.5" text-anchor="end" font-size="21.5" font-weight="bold" transform="rotate(-29 157.5 699.5)">0.00</text><text x="174.4" y="735" text-anchor="middle" font-size="22.5" font-weight="bold">0.0</text><text x="307.4" y="735" text-anchor="middle" font-size="22.5" font-weight="bold">0.5</text><text x="440.4" y="735" text-anchor="middle" font-size="22.5" font-weight="bold">1.0</text><text x="573.4" y="735" text-anchor="middle" font-size="22.5" font-weight="bold">1.5</text><text x="706.4" y="735" text-anchor="middle" font-size="22.5" font-weight="bold">2.0</text><text x="839.4" y="735" text-anchor="middle" font-size="22.5" font-weight="bold">2.5</text><text x="973.0" y="735" text-anchor="middle" font-size="22.5" font-weight="bold">2.9</text><text x="0" y="0" text-anchor="middle" font-size="28.5" font-weight="bold" transform="translate(574 789) scale(.965 1)">X Axis (units)</text><text x="0" y="0" text-anchor="middle" font-size="29.5" font-weight="bold" transform="translate(60.8 484) rotate(-90) scale(.93 1)">Y Axis (units)</text></svg><div class="a t" style="left:158px;top:75px;font-size:20.7px;font-weight:bold;line-height:26px">Please press the right mouse button for the<br>graphing features menu.&nbsp; Press F1 for help.</div><div class="a t" style="right:34px;top:75px;font-size:20.8px;font-weight:bold;line-height:26px;text-align:right;letter-spacing:.8px">S = 4.54382426<br>r = 0.99980361</div><div class="a" style="left:41px;top:76px;width:78px;height:44px;background:#f0f0f0;border-style:solid;border-width:1.5px 2px 2px 1.5px;border-color:#000 #000 #000 #a0a0a0"></div><div class="a" style="left:42.5px;top:77.5px;width:74px;height:40px;border-style:solid;border-width:1.5px 1px 1px 1.5px;border-color:#fff #909090 #909090 #fff"></div><svg class="a" style="left:0;top:0" width="200" height="200" viewBox="14 122 200 200"><circle cx="75.6" cy="207.5" r="3.6" fill="#0000ff"/><path d="M64.6 217.5L68.5 213.4H77.5L73.8 229.3L77.5 228.3L76.6 232.2L72.5 235.2H66L64.6 233.5L66.9 232L70.4 218.5L64.6 219.8Z" fill="#0000ff"/></svg><div class="a t" style="left:72px;top:87px;font-size:23px;color:#000;transform:scaleX(.91);transform-origin:0 0">Info</div></div><div class="a" style="left:1888px;top:505px;width:76px;height:76px;border-radius:50%;background:radial-gradient(circle at 50% 50%,#f2f5fe 0%,#e6ecfc 55%,#c6d4f6 80%,#b8c9f4 100%)"></div><svg class="a" style="left:1908px;top:520px" width="32" height="50"><rect x="9" y="4" width="18" height="10" fill="#a9adb6"/><rect x="13" y="7" width="2" height="2" fill="#444"/><rect x="20" y="7" width="3" height="2" fill="#444"/><path d="M4.5 14H31V36Q31 46 18 46Q4.5 46 4.5 36Z" fill="#5b87f2"/></svg></body></html>
